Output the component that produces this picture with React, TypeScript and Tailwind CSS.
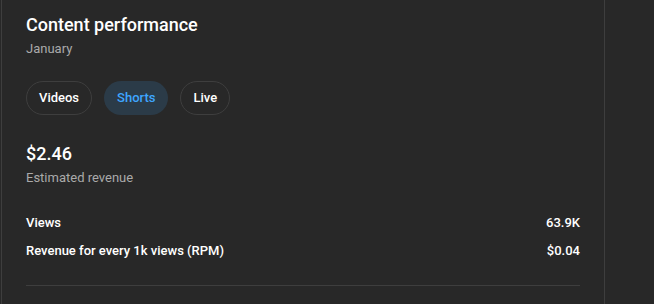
import React from "react"

const tabs = [
  { label: "Videos", active: false },
  { label: "Shorts", active: true },
  { label: "Live", active: false },
]

const rows = [
  { label: "Views", value: "63.9K" },
  { label: "Revenue for every 1k views (RPM)", value: "$0.04" },
]

export default function App() {
  return (
    <div className="h-[304px] w-full overflow-hidden bg-[#282828] font-['Roboto',_'Liberation_Sans',_sans-serif] text-white">
      <div className="ml-[1px] h-full w-[604px] border-x border-[#3e3e3e] px-6 pt-[13px]">
        <h2 className="text-[18px] font-medium leading-6">Content performance</h2>
        <p className="mt-[3px] text-[13px] leading-[18px] text-[#aaaaaa]">January</p>

        <div className="mt-[23px] flex gap-3">
          {tabs.map((t) => (
            <button
              key={t.label}
              className={
                t.active
                  ? "h-[34px] rounded-full border border-transparent bg-[#2b3b48] px-3 text-[13px] font-medium text-[#3ea6ff]"
                  : "h-[34px] rounded-full border border-[#3e3e3e] px-3 text-[13px] font-medium text-white"
              }
            >
              {t.label}
            </button>
          ))}
        </div>

        <div className="mt-[27px]">
          <div className="text-[18px] font-medium leading-6">$2.46</div>
          <div className="mt-[3px] text-[13px] leading-[18px] text-[#aaaaaa]">Estimated revenue</div>
        </div>

        <div className="mt-[27px] flex flex-col gap-[10px]">
          {rows.map((r) => (
            <div key={r.label} className="flex justify-between text-[13px] font-medium leading-[18px]">
              <span>{r.label}</span>
              <span>{r.value}</span>
            </div>
          ))}
        </div>

        <div className="mt-[25px] border-t border-[#3e3e3e]" />
      </div>
    </div>
  )
}
